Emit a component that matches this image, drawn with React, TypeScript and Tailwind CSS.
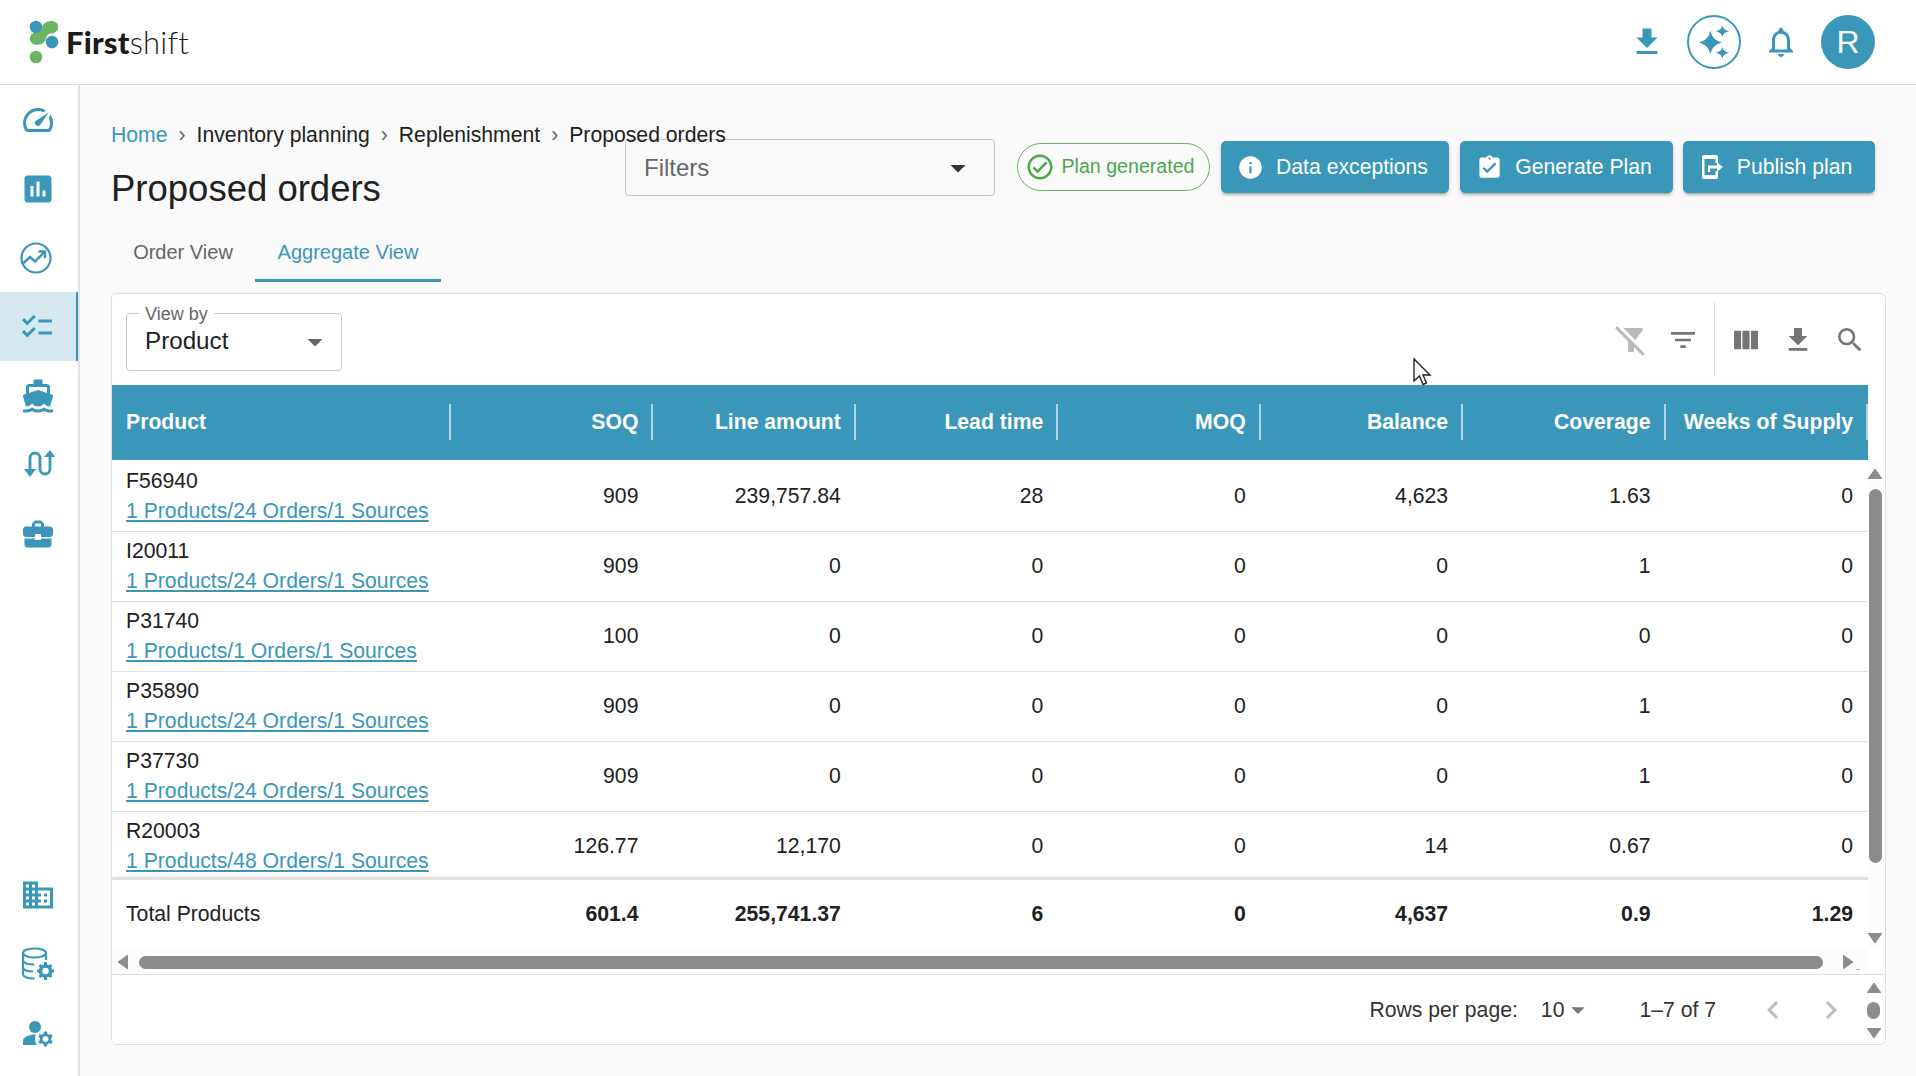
import { FC, ReactNode } from "react";
import {
  MdAssessment,
  MdAssignmentTurnedIn,
  MdBusinessCenter,
  MdChecklist,
  MdChevronLeft,
  MdChevronRight,
  MdDirectionsBoat,
  MdArrowDropDown,
  MdDomain,
  MdFileDownload,
  MdFilterAltOff,
  MdFilterList,
  MdInfo,
  MdManageAccounts,
  MdOutlineCheckCircle,
  MdOutlineNotifications,
  MdSearch,
  MdSpeed,
  MdViewColumn,
} from "react-icons/md";

const columns = ["SOQ", "Line amount", "Lead time", "MOQ", "Balance", "Coverage", "Weeks of Supply"];

const rows = [
  { id: "F56940", link: "1 Products/24 Orders/1 Sources", values: ["909", "239,757.84", "28", "0", "4,623", "1.63", "0"] },
  { id: "I20011", link: "1 Products/24 Orders/1 Sources", values: ["909", "0", "0", "0", "0", "1", "0"] },
  { id: "P31740", link: "1 Products/1 Orders/1 Sources", values: ["100", "0", "0", "0", "0", "0", "0"] },
  { id: "P35890", link: "1 Products/24 Orders/1 Sources", values: ["909", "0", "0", "0", "0", "1", "0"] },
  { id: "P37730", link: "1 Products/24 Orders/1 Sources", values: ["909", "0", "0", "0", "0", "1", "0"] },
  { id: "R20003", link: "1 Products/48 Orders/1 Sources", values: ["126.77", "12,170", "0", "0", "14", "0.67", "0"] },
];

const totals = ["601.4", "255,741.37", "6", "0", "4,637", "0.9", "1.29"];

const Logo = () => (
  <svg width="40" height="46" viewBox="0 0 40 46" className="shrink-0">
    <circle cx="8" cy="8" r="6.3" fill="#3A97B9" />
    <circle cx="24" cy="23" r="6.3" fill="#3A97B9" />
    <circle cx="8" cy="38" r="6.3" fill="#6DB463" />
    <path d="M24 2 a6.2 6.2 0 0 1 0 12.4 c-4 0 -5 2 -6 5 c-1 4 -4 6.4 -10 6.4 a6.2 6.2 0 0 1 0 -12.4 c4 0 5 -2 6 -5 c1 -4 4 -6.4 10 -6.4 z" fill="#6DB463" />
  </svg>
);

const TrendIcon = () => (
  <svg width="34" height="34" viewBox="0 0 34 34" fill="none" stroke="#3A97B9" strokeWidth="2.2" className="-ml-[5px]">
    <circle cx="17" cy="17" r="14.5" />
    <path d="M3.5 23 L11 16 L16 20.5 L25 11.5" strokeWidth="2.4" />
    <path d="M19.5 10.5 H26 V17" strokeWidth="2.4" />
  </svg>
);

const RouteIcon = () => (
  <svg width="34" height="30" viewBox="0 0 34 30" fill="none" stroke="#3A97B9" strokeWidth="2.8" className="-mt-[2px]">
    <path d="M9 22 V9 a5 5 0 0 1 10 0 V20 a5 5 0 0 0 10 0 V6" />
    <path d="M3 20 H15 L9 28 z M23 8 H34 L29 1 z" fill="#3A97B9" stroke="none" />
  </svg>
);

const DatabaseGearIcon = () => (
  <svg width="34" height="34" viewBox="0 0 34 34" fill="none" stroke="#3A97B9" strokeWidth="2.2">
    <ellipse cx="13.5" cy="6" rx="11.5" ry="4.5" />
    <path d="M2 6 V27 C2 30 7 31.5 13.5 31.5 M25 6 V13 M2 13 C2 16 7 17.5 13.5 17.5 M2 20 C2 23 6 24.5 12 24.5" />
    <circle cx="24.5" cy="24" r="5" strokeWidth="3.6" />
    <path d="M24.5 15 V18 M24.5 30 V33 M16 24 H19 M30 24 H33 M18.5 18 L20.5 20 M28.5 28 L30.5 30 M18.5 30 L20.5 28 M28.5 20 L30.5 18" strokeWidth="3" />
  </svg>
);

const SparkleIcon = () => (
  <svg width="36" height="36" viewBox="0 0 30 30" fill="#3A97B9">
    <path d="M12 5.5 C13.4 11 15 13.4 21.5 15.5 C15 17.6 13.4 20 12 25.5 C10.6 20 9 17.6 2.5 15.5 C9 13.4 10.6 11 12 5.5 z" />
    <path d="M22 1 C22.6 3.6 23.6 4.8 27.5 6 C23.6 7.2 22.6 8.4 22 11 C21.4 8.4 20.4 7.2 16.5 6 C20.4 4.8 21.4 3.6 22 1 z" />
    <path d="M22 19 C22.6 21.6 23.6 22.8 27.5 24 C23.6 25.2 22.6 26.4 22 29 C21.4 26.4 20.4 25.2 16.5 24 C20.4 22.8 21.4 21.6 22 19 z" />
  </svg>
);

const PublishIcon = () => (
  <svg width="24" height="26" viewBox="0 0 24 26" fill="none">
    <path d="M3 1 H15 a2 2 0 0 1 2 2 V9 H14.5 V5 H3.5 V21 H14.5 V17 H17 V23 a2 2 0 0 1 -2 2 H3 a2 2 0 0 1 -2 -2 V3 a2 2 0 0 1 2 -2 z" fill="#fff" />
    <path d="M7 11.5 H16 V8.5 L22 13 L16 17.5 V14.5 H9 V18 H7 z" fill="#fff" />
  </svg>
);

const ScrollArrow: FC<{ dir: "up" | "down" | "left" | "right" }> = ({ dir }) => {
  const points = {
    up: "7,0 14,10 0,10",
    down: "0,0 14,0 7,10",
    left: "10,0 10,14 0,7",
    right: "0,0 10,7 0,14",
  };
  const vertical = dir === "up" || dir === "down";
  return (
    <svg width={vertical ? 14 : 10} height={vertical ? 10 : 14} viewBox={vertical ? "0 0 14 10" : "0 0 10 14"} className="shrink-0">
      <polygon points={points[dir]} fill="#8c8c8c" stroke="#8c8c8c" strokeWidth="1" strokeLinejoin="round" />
    </svg>
  );
};

const NavItem: FC<{ children: ReactNode; active?: boolean }> = ({ children, active }) => (
  <div
    className={`h-[69px] flex items-center justify-center pr-[2px] text-[36px] text-[#3A97B9] ${
      active ? "bg-[#D6E9EF] border-r-2 border-[#3A97B9]" : ""
    }`}
  >
    {children}
  </div>
);

const ActionButton: FC<{ icon: ReactNode; label: string; width: string }> = ({ icon, label, width }) => (
  <button
    className={`${width} h-[52px] pr-[5px] rounded-[5px] bg-[#3A97B9] text-white flex items-center justify-center gap-[12px] shadow-[0_3px_3px_-2px_rgba(0,0,0,0.3),0_2px_5px_0_rgba(0,0,0,0.14)]`}
  >
    {icon}
    {label}
  </button>
);

const ToolIcon: FC<{ children: ReactNode; className?: string }> = ({ children, className }) => (
  <span className={`w-[52px] flex justify-center text-[32px] text-[#757575] ${className ?? ""}`}>{children}</span>
);

export default function App() {
  return (
    <div className="w-[1916px] h-[1076px] overflow-hidden bg-[#FAFAFA] text-[21.2px] text-[#212121] font-['Liberation_Sans',Arial,sans-serif] relative">
      <header className="h-[85px] bg-white border-b border-[#DDDDDD] flex items-center justify-between pl-[28px] pr-[41px]">
        <div className="flex items-center">
          <Logo />
          <span className="font-['Lato',sans-serif] text-[31px] text-[#1c1c1c] -ml-[2px] tracking-[0.2px]">
            <span className="font-black">First</span>
            <span className="font-light">shift</span>
          </span>
        </div>
        <div className="flex items-center">
          <MdFileDownload className="text-[#3A97B9] text-[36px] mr-[22px]" />
          <div className="w-[54px] h-[54px] rounded-full border-2 border-[#3A97B9] flex items-center justify-center mr-[22px]">
            <SparkleIcon />
          </div>
          <MdOutlineNotifications className="text-[#3A97B9] text-[36px] mr-[22px]" />
          <div className="w-[54px] h-[54px] rounded-full bg-[#3A97B9] text-white text-[32px] flex items-center justify-center">
            R
          </div>
        </div>
      </header>

      <div className="flex h-[991px]">
        <aside className="w-[80px] shrink-0 bg-white border-r-2 border-[#E3E3E3] flex flex-col justify-between pb-[9px]">
          <div className="flex flex-col">
            <NavItem><MdSpeed /></NavItem>
            <NavItem><MdAssessment /></NavItem>
            <NavItem><TrendIcon /></NavItem>
            <NavItem active><MdChecklist /></NavItem>
            <NavItem><MdDirectionsBoat /></NavItem>
            <NavItem><RouteIcon /></NavItem>
            <NavItem><MdBusinessCenter /></NavItem>
          </div>
          <div className="flex flex-col">
            <NavItem><MdDomain /></NavItem>
            <NavItem><DatabaseGearIcon /></NavItem>
            <NavItem><MdManageAccounts /></NavItem>
          </div>
        </aside>

        <main className="flex-1 pl-[31px] pr-[31px] pt-[39px]">
          <div className="flex h-[169px]">
            <div className="w-[514px] shrink-0 whitespace-nowrap">
              <div className="flex items-center h-[23px] -mt-[1px] relative z-10">
                <span className="text-[#3A97B9]">Home</span>
                <span className="mx-[11px] text-[#666]">›</span>
                <span>Inventory planning</span>
                <span className="mx-[11px] text-[#666]">›</span>
                <span>Replenishment</span>
                <span className="mx-[11px] text-[#666]">›</span>
                <span>Proposed orders</span>
              </div>
              <h1 className="text-[36.5px] leading-[44px] mt-[21px]">Proposed orders</h1>
              <div className="flex mt-[16px] text-[20px]">
                <div className="w-[144px] h-[55px] pt-[14px] leading-[23px] text-center text-[#666]">Order View</div>
                <div className="w-[186px] h-[55px] pt-[14px] leading-[23px] text-center text-[#3A97B9] border-b-[3px] border-[#3A97B9]">
                  Aggregate View
                </div>
              </div>
            </div>
            <div className="flex-1 flex items-start gap-[11px] pt-[17px] pr-[11px]">
              <div className="w-[370px] h-[57px] -mt-[2px] mr-[11px] shrink-0 rounded-[4px] border border-[#C8C8C8] flex items-center justify-between pl-[18px] pr-[24px] text-[24px] text-[#666]">
                Filters
                <MdArrowDropDown className="text-[#333] text-[36px] -mr-[6px]" />
              </div>
              <div className="w-[193px] h-[48px] mt-[2px] pr-[8px] pb-px shrink-0 rounded-full border border-[#6DB463] flex items-center justify-center gap-[7px] text-[19.6px] text-[#4CA64C]">
                <MdOutlineCheckCircle className="text-[30px]" />
                Plan generated
              </div>
              <ActionButton width="w-[228px]" icon={<MdInfo className="text-[27px]" />} label="Data exceptions" />
              <ActionButton width="w-[213px]" icon={<MdAssignmentTurnedIn className="text-[27px]" />} label="Generate Plan" />
              <ActionButton width="w-[192px] -ml-px" icon={<PublishIcon />} label="Publish plan" />
            </div>
          </div>

          <section className="w-[1775px] h-[752px] bg-white border border-[#E0E0E0] rounded-[6px] flex flex-col overflow-hidden">
            <div className="h-[91px] shrink-0 flex items-center justify-between pl-[14px] pr-[9px]">
              <div className="relative w-[216px] h-[58px] mt-[4px] rounded-[4px] border border-[#C8C8C8] flex items-center justify-between pl-[18px] pr-[8px] text-[24.2px]">
                <span className="absolute -top-[10px] left-[12px] bg-white px-[6px] text-[18px] leading-[20px] text-[#666]">
                  View by
                </span>
                Product
                <MdArrowDropDown className="text-[#666] text-[36px]" />
              </div>
              <div className="flex items-center h-full pt-[8px] pb-[8px]">
                <ToolIcon className="opacity-50 text-[36px]"><MdFilterAltOff /></ToolIcon>
                <ToolIcon><MdFilterList /></ToolIcon>
                <div className="w-px h-full bg-[#DDDDDD] mx-[5px]" />
                <ToolIcon><MdViewColumn /></ToolIcon>
                <ToolIcon><MdFileDownload /></ToolIcon>
                <ToolIcon><MdSearch /></ToolIcon>
              </div>
            </div>

            <div className="flex h-[590px] shrink-0 border-b border-[#E0E0E0]">
              <div className="w-[1756px] shrink-0 flex flex-col">
                <div className="grid grid-cols-[339px_repeat(7,1fr)] h-[75px] shrink-0 pb-[2px] bg-[#3A97B9] text-white font-bold items-center">
                  <div className="h-[36px] flex items-center pl-[14px] border-r-2 border-white/60">Product</div>
                  {columns.map((c) => (
                    <div key={c} className="h-[36px] flex items-center justify-end pr-[13px] border-r-2 border-white/60 whitespace-nowrap">
                      {c}
                    </div>
                  ))}
                </div>
                <div className="h-[417px] shrink-0 overflow-hidden">
                  {rows.map((r) => (
                    <div key={r.id} className="grid grid-cols-[339px_repeat(7,1fr)] h-[70px] pb-[2px] border-b border-[#E0E0E0] items-center first:h-[72px] first:pb-0">
                      <div className="pl-[14px] leading-[30px]">
                        <div>{r.id}</div>
                        <a className="text-[#3A97B9] underline block">{r.link}</a>
                      </div>
                      {r.values.map((v, i) => (
                        <div key={i} className="text-right pr-[15px]">{v}</div>
                      ))}
                    </div>
                  ))}
                </div>
                <div className="grid grid-cols-[339px_repeat(7,1fr)] h-[73px] shrink-0 pb-[2px] items-center border-t-[3px] border-[#E0E0E0] shadow-[0_-4px_4px_-2px_rgba(0,0,0,0.06)] font-bold">
                  <div className="pl-[14px] font-normal">Total Products</div>
                  {totals.map((v, i) => (
                    <div key={i} className="text-right pr-[15px]">{v}</div>
                  ))}
                </div>
                <div className="flex-1 flex items-center bg-[#FCFCFC] pl-[6px] pr-[8px]">
                  <ScrollArrow dir="left" />
                  <div className="flex-1 h-[13px] rounded-full bg-[#8C8C8C] ml-[11px] mr-[20px]" />
                  <ScrollArrow dir="right" />
                  <span className="w-[4px] h-px ml-[3px] mt-[14px] bg-[#BBBBBB]" />
                </div>
              </div>
              <div className="flex-1 flex flex-col items-center pt-[76px] pb-[28px] pr-[4px]">
                <div className="h-[28px] w-full bg-[#FCFCFC] flex justify-center pt-[8px]"><ScrollArrow dir="up" /></div>
                <div className="w-[13px] flex-1 rounded-full bg-[#8C8C8C]" />
                <div className="h-[83px] w-full bg-[#FCFCFC] flex justify-center items-end pb-[3px]"><ScrollArrow dir="down" /></div>
              </div>
            </div>

            <div className="flex-1 flex items-center justify-end text-[#333] pt-px">
              <span>Rows per page:</span>
              <span className="ml-[23px]">10</span>
              <MdArrowDropDown className="text-[#757575] text-[32px] -ml-[2px]" />
              <span className="ml-[45px]">1–7 of 7</span>
              <MdChevronLeft className="text-[#BDBDBD] text-[36px] ml-[39px]" />
              <MdChevronRight className="text-[#BDBDBD] text-[36px] ml-[22px]" />
              <div className="h-full w-[17px] ml-[16px] mr-[3px] flex flex-col items-center justify-center gap-[9px]">
                <ScrollArrow dir="up" />
                <div className="w-[13px] h-[17px] rounded-full bg-[#8C8C8C]" />
                <ScrollArrow dir="down" />
              </div>
            </div>
          </section>
        </main>
      </div>

      <svg className="absolute left-[1412px] top-[357px]" width="22" height="30" viewBox="0 0 22 30">
        <path d="M2 2 V24 L7.5 19 L11 27.5 L14.5 26 L11 18 H18 z" fill="#fff" stroke="#222" strokeWidth="1.4" />
      </svg>
    </div>
  );
}
